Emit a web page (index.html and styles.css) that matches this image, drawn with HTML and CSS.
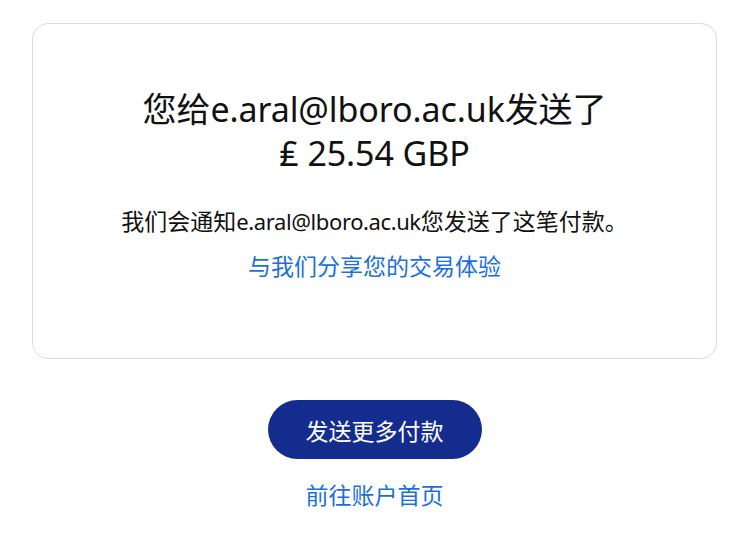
FILE: index.html
```html
<!DOCTYPE html>
<html lang="zh-CN">
<head>
    <meta charset="UTF-8">
    <meta name="viewport" content="width=device-width, initial-scale=1.0">
    <title>付款已发送</title>
    <link rel="stylesheet" href="styles.css">
</head>
<body>
    <div class="page">
        <div class="card">
            <h1 class="title">您给e.aral@lboro.ac.uk发送了<br>₤ 25.54 GBP</h1>
            <p class="note">我们会通知<span class="email">e.aral@lboro.ac.uk</span>您发送了这笔付款。</p>
            <a href="#" class="link">与我们分享您的交易体验</a>
        </div>

        <div class="actions">
            <button class="send-button">发送更多付款</button>
            <a href="#" class="link">前往账户首页</a>
        </div>
    </div>
</body>
</html>
```

FILE: styles.css
```css
:root {
    --primary-color: #142c8e;
    --link-color: #1a6fe0;
    --text-color: #111;
    --border-color: #dcdcd6;
}

body {
    font-family: 'Noto Sans', 'Noto Sans CJK SC', sans-serif;
    margin: 0;
    padding: 0;
    background-color: white;
    color: var(--text-color);
}

.page {
    padding: 23px 21px 0 32px;
}

.card {
    border: 1px solid var(--border-color);
    border-radius: 16px;
    padding: 63px 20px 77px;
    display: flex;
    flex-direction: column;
    align-items: center;
    text-align: center;
}

.title {
    margin: 0;
    font-size: 34px;
    font-weight: 400;
    line-height: 44px;
    letter-spacing: -0.1px;
}

.note {
    margin: 31px 0 0;
    font-size: 23px;
    line-height: 30px;
}

.email {
    font-size: 22px;
    letter-spacing: -0.4px;
}

.link {
    color: var(--link-color);
    text-decoration: none;
    font-size: 23px;
    line-height: 30px;
}

.card .link {
    margin-top: 15px;
}

.actions {
    display: flex;
    flex-direction: column;
    align-items: center;
    gap: 21px;
    margin-top: 41px;
}

.send-button {
    background-color: var(--primary-color);
    color: white;
    border: none;
    border-radius: 30px;
    width: 214px;
    height: 59px;
    font-family: inherit;
    font-size: 23px;
    cursor: pointer;
}
```
